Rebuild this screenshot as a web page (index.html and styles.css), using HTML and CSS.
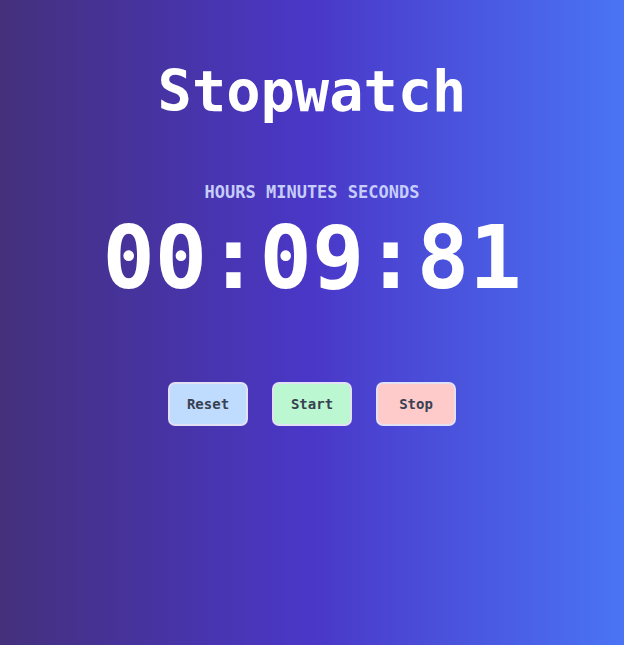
FILE: index.html
```html
<!DOCTYPE html>
<html lang="en">
<head>
<meta charset="utf-8">
<title>Stopwatch</title>
<link rel="stylesheet" href="styles.css">
</head>
<body>
<main class="app">
  <h1 class="title">Stopwatch</h1>
  <div class="labels">HOURS MINUTES SECONDS</div>
  <div class="time">00:09:81</div>
  <div class="controls">
    <button class="btn btn-reset">Reset</button>
    <button class="btn btn-start">Start</button>
    <button class="btn btn-stop">Stop</button>
  </div>
</main>
</body>
</html>
```
FILE: styles.css
```css
html, body {
  margin: 0;
  padding: 0;
  height: 100%;
}
body {
  background: linear-gradient(to right, #44307b 0%, #4a37c8 50%, #4a74f5 100%);
  font-family: "DejaVu Sans Mono", "Liberation Mono", monospace;
  color: #ffffff;
}
.app {
  display: flex;
  flex-direction: column;
  align-items: center;
  padding-top: 55px;
}
.title {
  margin: 0;
  font-size: 57px;
  font-weight: bold;
  line-height: 72px;
}
.labels {
  margin-top: 54px;
  font-size: 17px;
  font-weight: bold;
  color: #c6cdfb;
  line-height: 22px;
}
.time {
  margin-top: 5px;
  font-size: 87px;
  font-weight: bold;
  line-height: 100px;
}
.controls {
  display: flex;
  gap: 24px;
  margin-top: 74px;
}
.btn {
  width: 80px;
  height: 44px;
  border: 2px solid #e2e0f4;
  border-radius: 7px;
  font-family: "DejaVu Sans Mono", "Liberation Mono", monospace;
  font-size: 14px;
  font-weight: bold;
  color: #374151;
  padding: 0;
}
.btn-reset { background: #bfdbfe; }
.btn-start { background: #bbf7d0; }
.btn-stop { background: #fecaca; }
```
